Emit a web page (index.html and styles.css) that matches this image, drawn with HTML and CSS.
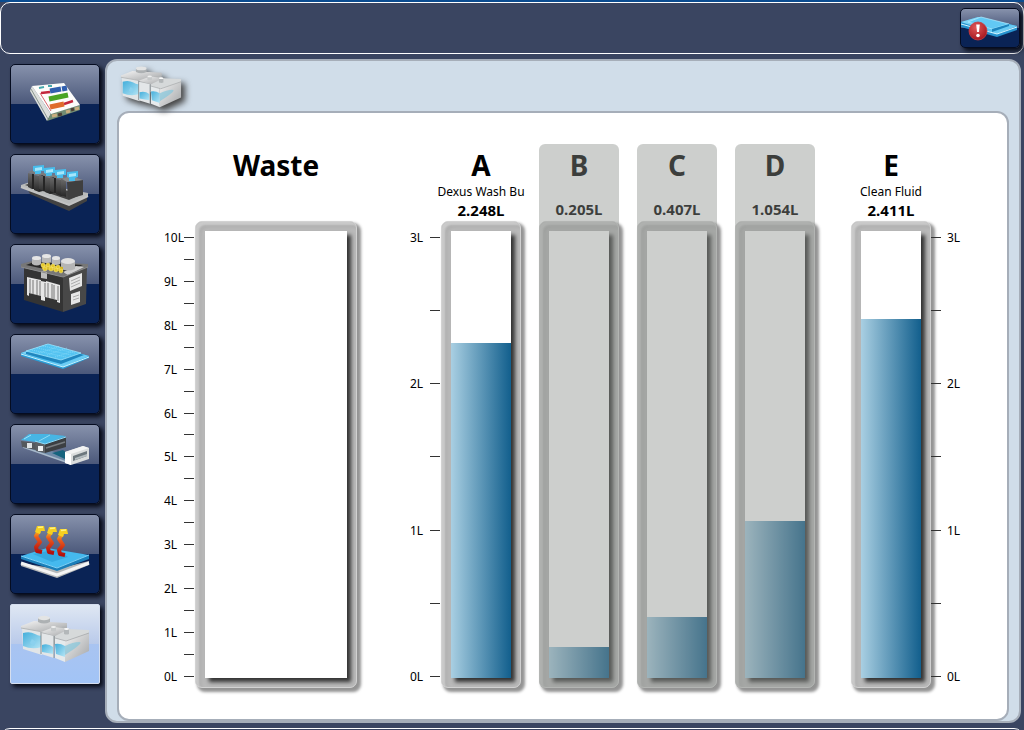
FILE: index.html
```html
<!DOCTYPE html>
<html lang="en">
<head>
  <meta charset="UTF-8" />
  <meta name="viewport" content="width=device-width, initial-scale=1.0" />
  <title>System Fluids</title>
  <link rel="stylesheet" href="styles.css">
</head>
<body>
  <!--shared gradients and the fluid tanks icon-->
  <svg class="defs" aria-hidden="true">
    <defs>
      <linearGradient id="cyan" x1="0" y1="0" x2="1" y2="1">
        <stop offset="0" stop-color="#a5e6fb"/><stop offset="0.5" stop-color="#48bdf0"/><stop offset="1" stop-color="#8fdcf8"/>
      </linearGradient>
      <linearGradient id="dark" x1="0" y1="0" x2="0" y2="1">
        <stop offset="0" stop-color="#6a6a6a"/><stop offset="1" stop-color="#262626"/>
      </linearGradient>
      <linearGradient id="silver" x1="0" y1="0" x2="1" y2="1">
        <stop offset="0" stop-color="#f4f4f4"/><stop offset="1" stop-color="#a2a4a6"/>
      </linearGradient>
      <linearGradient id="water" x1="0" y1="0" x2="1" y2="1">
        <stop offset="0" stop-color="#43aedb"/><stop offset="1" stop-color="#b5e5f5"/>
      </linearGradient>
      <linearGradient id="flame" x1="0" y1="0" x2="0" y2="1">
        <stop offset="0" stop-color="#f5b820"/><stop offset="0.3" stop-color="#ec5a1c"/><stop offset="1" stop-color="#b3100e"/>
      </linearGradient>
      <radialGradient id="red" cx="0.4" cy="0.3" r="0.8">
        <stop offset="0" stop-color="#e05a5a"/><stop offset="1" stop-color="#a00f18"/>
      </radialGradient>
    </defs>
    <symbol id="tanks" viewBox="9 9 72 52">
      <path d="M12 23 32 27V51L13 45Z" fill="#e1e5e7"/>
      <path d="M13 29Q20 27 25 30T32 31V43Q22 46 13 42Z" fill="url(#water)"/>
      <path d="M22 35l4 3-2 4-4-3Z" fill="#8bd1ee"/>
      <path d="M32 27 57 20V32L32 50Z" fill="#b0b3b5"/>
      <path d="M11 22 24 17 57 19 57 22 33 28 11 24Z" fill="url(#silver)"/>
      <path d="M11 24 33 28 57 22" fill="none" stroke="#b5b8b9"/>
      <path d="M28 14V18Q34 21 40 18V14Z" fill="#adb1b3"/>
      <ellipse cx="34" cy="14" rx="6" ry="2.2" fill="#e3e4e4"/>
      <path d="M31 29 44 32V54L31 50Z" fill="#e3e6e8"/>
      <path d="M32 41Q38 39 43 43V50L32 48Z" fill="url(#water)"/>
      <path d="M31 28 44 23 61 25 45 32Z" fill="url(#silver)"/>
      <path d="M31 28V50M44 32V54" stroke="#7d868b" stroke-width="0.9"/>
      <path d="M41 23V27Q44 28 46 27V23Z" fill="#c5c8c9"/>
      <ellipse cx="43.5" cy="23" rx="2.5" ry="1" fill="#f0f0f0"/>
      <path d="M45 33 55 36V58L45 54Z" fill="#e6eaec"/>
      <path d="M45 40Q50 39 55 42V53L46 50Z" fill="url(#water)"/>
      <path d="M55 36 79 28V47L55 58Z" fill="url(#silver)"/>
      <path d="M55 42Q63 38 69 38T58 49L55 51Z" fill="#85c6dc" opacity="0.7"/>
      <path d="M45 32 59 25 79 26 79 29 56 37 45 34Z" fill="#d6d9da"/>
      <path d="M45 34 56 37 79 29" fill="none" stroke="#a0a4a6" stroke-width="0.7"/>
      <path d="M54 25V30Q57 31 59 30V25Z" fill="#b3b7b9"/>
      <ellipse cx="56.5" cy="25" rx="2.5" ry="1" fill="#fafafa"/>
    </symbol>
  </svg>

  <div class="app">
    <header class="topbar">
      <button class="alert-btn" type="button" aria-label="Plate alert">
        <svg viewBox="1 1 58 38">
          <path d="M1 14 18 9 57 18V22L37 29 1 19Z" fill="#2793cf"/>
          <path d="M1 14 18 9 57 18 37 26Z" fill="url(#cyan)"/>
          <path d="M8 14 21 9 49 16 32 21Z" fill="#62c9f4" stroke="#b6edff" stroke-width="0.7"/>
          <path d="M32 21 49 16V18L32 24Z" fill="#1c84bd"/>
          <path d="M1 16 37 26 57 19" fill="none" stroke="#d5f6ff" stroke-width="1"/>
          <circle cx="18" cy="23" r="9" fill="url(#red)" stroke="#c93a3e" stroke-width="0.8"/>
          <path d="M16.2 16.5h3.6l-0.8 7.5h-2Z" fill="#fff"/>
          <circle cx="18" cy="27.5" r="1.8" fill="#fff"/>
        </svg>
      </button>
    </header>

    <div class="workspace">
      <nav class="sidebar">
        <button class="nav-btn" type="button" aria-label="Worklist">
          <svg viewBox="1 1 88 78">
            <path d="M22 22 20 27 37 57 41 50Z" fill="#dcdfdc"/>
            <path d="M21 25 38 55" stroke="#8c9892" stroke-width="1"/>
            <path d="M41 49 70 41 70 46 37 57Z" fill="#728c74"/>
            <path d="M42 52l5-1M56 48l4-1M65 45l4-1" stroke="#c9ad7e" stroke-width="3"/>
            <path d="M48 51l4-1M61 46l3-1" stroke="#4d3f34" stroke-width="3"/>
            <path d="M22 22 54 19 70 41 41 50Z" fill="#fdfdfb"/>
            <path d="M29 24l5-1M38 22l4 0" stroke="#48a9ae" stroke-width="2"/>
            <path d="M31 29l9-1M54 40l9-3" stroke="#c3273c" stroke-width="2.5"/>
            <path d="M40 27l11-2M52 25l5-1" stroke="#315fae" stroke-width="5"/>
            <path d="M39 35l19-4" stroke="#4aa525" stroke-width="5"/>
            <path d="M40 43l14-3" stroke="#df6c2c" stroke-width="5"/>
            <path d="M30 29 41 47" stroke="#d7656d" stroke-width="1"/>
          </svg>
        </button>
        <button class="nav-btn" type="button" aria-label="Samples">
          <svg viewBox="1 1 88 78">
            <path d="M17 34 59 49 77 41V47L59 57 20 40Z" fill="#424242"/>
            <path d="M11 31 20 28 78 39 78 42 59 51 11 33Z" fill="#b9bbbb"/>
            <path d="M15 31 21 29 73 40 59 46Z" fill="#444"/>
            <g id="vial">
              <path d="M18 19 22 20V35L18 33ZM24 21 29 22V38L24 36Z" fill="url(#dark)"/>
              <path d="M22 20 24 19V35H22ZM29 22 33 21V37L29 38Z" fill="#252525"/>
              <path d="M18 18 25 16 34 20 29 22Z" fill="#7c7c7c"/>
              <path d="M23 12 34 11 34 17 31 17 31 20 25 20 25 18 23 17Z" fill="#48bdec"/>
              <path d="M25 14 32 13V16L25 17Z" fill="#a5e6fb"/>
            </g>
            <use href="#vial" x="11" y="2"/>
            <use href="#vial" x="22" y="4"/>
            <path d="M51 25 56 26V43L51 41Z" fill="url(#dark)"/>
            <path d="M57 28 73 26V41L58 45Z" fill="#3f3f3f"/>
            <path d="M52 25 60 22 73 26 57 28Z" fill="#8a8a8a"/>
            <path d="M57 18 68 17 68 23 65 24 65 27 59 27 59 24 57 23Z" fill="#48bdec"/>
            <path d="M59 20 66 19V22L59 23Z" fill="#a5e6fb"/>
            <path d="M11 33 59 51 78 42" fill="none" stroke="#c2c3c3" stroke-width="2"/>
          </svg>
        </button>
        <button class="nav-btn" type="button" aria-label="Reagents">
          <svg viewBox="1 1 88 78">
            <path d="M14 24 53 33V68L14 56Z" fill="#343434"/>
            <path d="M53 33 77 23 76 60 53 68Z" fill="#484848"/>
            <path d="M11 20 22 17 78 20 78 23 53 33 11 23Z" fill="#777"/>
            <path d="M16 21 24 18 73 21 53 29Z" fill="#282828"/>
            <path d="M22 14V20Q27 23 31 20V14ZM32 12V18Q36 20 41 18V12ZM42 14V20Q46 22 50 20V14Z" fill="#b8b8b8"/>
            <ellipse cx="26.5" cy="14" rx="4.5" ry="2" fill="#e6e6e6"/>
            <ellipse cx="36.5" cy="12" rx="4.5" ry="2" fill="#e6e6e6"/>
            <ellipse cx="46" cy="14" rx="4" ry="2" fill="#e6e6e6"/>
            <path d="M53 28 66 22 74 23 58 31Z" fill="#d0d0d0"/>
            <path d="M51 17V25Q58 28 65 25V17Z" fill="#b5b5b5"/>
            <ellipse cx="58" cy="17" rx="7" ry="3" fill="#e0e0e0"/>
            <path d="M31 20 53 23 53 28 32 25Z" fill="#d3b41f"/>
            <g fill="#e7ca2a" stroke="#fbef94" stroke-width="0.5">
              <circle cx="33" cy="21" r="2"/><circle cx="38" cy="21" r="2"/><circle cx="43" cy="22" r="2"/><circle cx="48" cy="23" r="2"/><circle cx="35" cy="25" r="2"/><circle cx="41" cy="25" r="2"/><circle cx="46" cy="26" r="2"/><circle cx="51" cy="27" r="2"/>
            </g>
            <path d="M31 27 37 28V35L31 34Z" fill="#bdbdbd"/>
            <path d="M17 33 31 36 31 37 36 38 36 37 50 41V59L47 58V56L35 53V57L31 56V52L19 49V52L17 51Z" fill="#e6e6e6"/>
            <path d="M20 35V49M23 36V50M27 36V51M30 37V52M35 39V53M38 39V54M42 40V55M44 41V55M48 42V57" stroke="#777" stroke-width="1"/>
            <path d="M59 34 72 29V42L60 47ZM61 50 70 47V58L61 61Z" fill="#e6e6e6"/>
            <path d="M61 37l9-4M61 40l9-4M61 43l9-4M63 53l6-2M63 56l6-2" stroke="#aaa" stroke-width="1"/>
            <path d="M11 23 53 33 78 23" fill="none" stroke="#8b8b8b"/>
          </svg>
        </button>
        <button class="nav-btn" type="button" aria-label="Plates">
          <svg viewBox="1 1 88 78">
            <path d="M11 19 37 10 79 22 79 24 53 35 11 22Z" fill="#2a9fd8"/>
            <path d="M11 19 37 10 79 22 53 33Z" fill="url(#cyan)"/>
            <path d="M16 18 38 10 74 21 51 30 16 20Z" fill="#1f87bf"/>
            <path d="M16 17 38 10 71 19 51 26Z" fill="#54c3f1" stroke="#a8e9ff" stroke-width="0.7"/>
            <path d="M22 16 56 23M27 14 61 21M33 12 65 19M29 19 50 12M37 21 57 14M45 23 64 17" stroke="#86d9f8" stroke-width="0.8" stroke-dasharray="1 1"/>
            <path d="M11 20 53 33 79 23" fill="none" stroke="#c9f3ff" stroke-width="1"/>
          </svg>
        </button>
        <button class="nav-btn" type="button" aria-label="Instrument">
          <svg viewBox="1 1 88 78">
            <path d="M13 23 24 22 59 32 56 38Z" fill="#6e8aa8"/>
            <path d="M13 23 56 38" stroke="#a8bacb" stroke-width="1.5"/>
            <path d="M42 29 53 26 57 29 55 35Z" fill="#16637e"/>
            <path d="M11 17 26 19V26L12 23Z" fill="#55595d"/>
            <path d="M11 16 19 10 38 10 26 18Z" fill="#47b5e4"/>
            <path d="M14 15 21 11" stroke="#9ce4fb"/>
            <path d="M17 19h5v5h-5Z" fill="#e0e4e6"/>
            <path d="M25 18 35 20V29L26 27Z" fill="#5d6165"/>
            <path d="M35 20 56 13V23L35 29Z" fill="#3c3f42"/>
            <path d="M25 17 37 10 56 12 35 20Z" fill="#47b5e4"/>
            <path d="M25 17 35 20 56 13" fill="none" stroke="#8adbf7"/>
            <path d="M29 17 40 11" stroke="#8edbf6"/>
            <path d="M28 22h5v5h-5Z" fill="#eef0f1"/>
            <path d="M36 24 55 18" stroke="#777c80" stroke-width="1.5"/>
            <path d="M55 28 73 22 79 24V35L61 41 55 39Z" fill="#dadddd"/>
            <path d="M55 28 61 30V41L55 39Z" fill="#fff"/>
            <path d="M55 28 73 22 79 24 61 30Z" fill="#f3f4f4"/>
            <path d="M63 32 77 27V32L63 37Z" fill="#6d777d"/>
            <path d="M65 34 77 30V32L65 36Z" fill="#b4bcc0"/>
          </svg>
        </button>
        <button class="nav-btn" type="button" aria-label="Incubators">
          <svg viewBox="1 1 88 78">
            <path d="M11 49 47 55 79 47V51L47 64 11 52Z" fill="#b5b8b9"/>
            <path d="M11 49 47 61 79 49" fill="none" stroke="#f4f4f4" stroke-width="3"/>
            <path d="M11 42 47 54 79 41V45L47 57 11 45Z" fill="#1b7fb9"/>
            <path d="M11 42 37 34 79 41 47 54Z" fill="#45b9ee"/>
            <path d="M11 42 47 54 79 41" fill="none" stroke="#7fd2f7"/>
            <path d="M23 40 48 35 58 43 42 48Z" fill="#1f8fca" opacity="0.4"/>
            <g id="heat">
              <path d="M29 17 26 22 30 28 26 33 27 37 32 38" fill="none" stroke="url(#flame)" stroke-width="4" stroke-linejoin="round"/>
              <path d="M25 18 27 12 34 12 35 17 31 17 30 20Z" fill="#f5cf20"/>
              <path d="M28 13.5 33 13" stroke="#fff37e" stroke-width="1.5"/>
            </g>
            <use href="#heat" x="12" y="1"/>
            <use href="#heat" x="23" y="3"/>
          </svg>
        </button>
        <button class="nav-btn active" type="button" aria-label="Fluids">
          <svg viewBox="1 1 88 78"><use href="#tanks" x="9" y="9" width="72" height="52"/></svg>
        </button>
      </nav>

      <main class="panel">
        <div class="panel-header">
          <svg class="panel-icon"><use href="#tanks"/></svg>
        </div>

        <div class="fluids">
          <!--waste-->
          <div class="group">
            <ul class="scale">
              <li>10L</li><li></li><li>9L</li><li></li><li>8L</li><li></li><li>7L</li><li></li><li>6L</li><li></li><li>5L</li><li></li><li>4L</li><li></li><li>3L</li><li></li><li>2L</li><li></li><li>1L</li><li></li><li>0L</li>
            </ul>
            <section class="tank waste">
              <div class="tank-info"><h2>Waste</h2></div>
              <div class="frame"><div class="glass"></div></div>
            </section>
          </div>

          <!--wash bottles A-E-->
          <div class="group">
            <ul class="scale">
              <li>3L</li><li></li><li>2L</li><li></li><li>1L</li><li></li><li>0L</li>
            </ul>
            <div class="bottles">
              <section class="tank">
                <div class="tank-info"><h2>A</h2><p class="fluid">Dexus Wash Bu</p><p class="volume">2.248L</p></div>
                <div class="frame"><div class="glass"><div class="fill" style="height: 74.93%"></div></div></div>
              </section>
              <section class="tank disabled">
                <div class="tank-info"><h2>B</h2><p class="fluid"></p><p class="volume">0.205L</p></div>
                <div class="frame"><div class="glass"><div class="fill" style="height: 6.83%"></div></div></div>
              </section>
              <section class="tank disabled">
                <div class="tank-info"><h2>C</h2><p class="fluid"></p><p class="volume">0.407L</p></div>
                <div class="frame"><div class="glass"><div class="fill" style="height: 13.57%"></div></div></div>
              </section>
              <section class="tank disabled">
                <div class="tank-info"><h2>D</h2><p class="fluid"></p><p class="volume">1.054L</p></div>
                <div class="frame"><div class="glass"><div class="fill" style="height: 35.13%"></div></div></div>
              </section>
              <section class="tank clean">
                <div class="tank-info"><h2>E</h2><p class="fluid">Clean Fluid</p><p class="volume">2.411L</p></div>
                <div class="frame"><div class="glass"><div class="fill" style="height: 80.37%"></div></div></div>
              </section>
            </div>
            <ul class="scale right">
              <li>3L</li><li></li><li>2L</li><li></li><li>1L</li><li></li><li>0L</li>
            </ul>
          </div>
        </div>
      </main>
    </div>

    <footer class="bottombar"></footer>
  </div>
</body>
</html>
```
FILE: styles.css
```css
/* Reset and Base Styles */
* {
  margin: 0;
  padding: 0;
  box-sizing: border-box;
}
body {
  font-family: 'Noto Sans', 'Open Sans', sans-serif;
  font-size: 12px;
  color: #000;
  background: #3a4561;
}
.defs {
  position: absolute;
  width: 0;
  height: 0;
}
.app {
  display: flex;
  flex-direction: column;
  height: 100vh;
  min-height: 700px;
  overflow: hidden;
  border-top: 2px solid #0b4c90;
}
/* Top and bottom bars */
.topbar {
  display: flex;
  justify-content: flex-end;
  align-items: flex-start;
  height: 52px;
  padding: 5px 3px;
  border: 1px solid #fff;
  border-radius: 10px;
}
.bottombar {
  flex: none;
  height: 40px;
  margin-bottom: -38px;
  border: 1px solid #fff;
  border-radius: 10px;
}
/* Buttons */
.alert-btn,
.nav-btn {
  display: block;
  border: 1px solid #050c20;
  border-radius: 5px;
  background: linear-gradient(#8792ac, #4b587a 50%, #0a2355 50%, #0a2355);
  box-shadow: 3px 3px 4px #080c18;
  cursor: pointer;
}
.alert-btn {
  width: 60px;
  height: 40px;
}
.nav-btn {
  width: 90px;
  height: 80px;
}
.alert-btn svg,
.nav-btn svg {
  display: block;
  width: 100%;
  height: 100%;
}
.nav-btn.active {
  border-color: #d5deee;
  border-radius: 2px;
  background: linear-gradient(#dfe7f3, #b9caea 50%, #a9c4f1 50%, #a2c4f6);
}
/* Layout */
.workspace {
  display: flex;
  flex: 1;
  gap: 5px;
  min-height: 0;
  padding: 5px 3px 5px 10px;
}
.sidebar {
  display: flex;
  flex-direction: column;
  gap: 10px;
  padding-top: 5px;
}
.panel {
  display: flex;
  flex: 1;
  flex-direction: column;
  padding: 0 10px;
  background: #d0dde9;
  border: 2px solid #a6aeb9;
  border-radius: 12px;
}
.panel-header {
  height: 50px;
  padding: 3px 0 0 2px;
}
.panel-icon {
  display: block;
  width: 64px;
  height: 46px;
  overflow: visible;
  filter: drop-shadow(4px 4px 3px #444);
}
.fluids {
  display: flex;
  flex: 1;
  justify-content: space-between;
  min-height: 0;
  padding: 31px 45px 31px;
  background: #fff;
  border: 2px solid #a6aeb9;
  border-radius: 12px;
}
.group {
  display: flex;
}
/* Scales */
.scale {
  display: flex;
  flex-direction: column;
  justify-content: space-between;
  width: 31px;
  padding: 93px 0 11px;
  list-style: none;
}
.scale li {
  display: flex;
  align-items: center;
  justify-content: space-between;
  width: 30px;
  height: 1px;
}
.scale li::after {
  content: "";
  width: 10px;
  height: 1px;
  margin-left: auto;
  background: #333;
}
/* sits above the shadow of the last tank */
.scale.right {
  position: relative;
}
.scale.right li {
  flex-direction: row-reverse;
  justify-content: flex-end;
  gap: 6px;
}
.scale.right li::after {
  margin-left: 0;
}
/* Tanks */
.bottles {
  display: flex;
  gap: 18px;
}
.tank {
  display: flex;
  flex-direction: column;
  position: relative;
  width: 80px;
}
.tank.waste {
  width: 162px;
}
.tank.clean {
  margin-left: 18px;
}
.tank-info {
  display: flex;
  flex-direction: column;
  align-items: center;
  height: 77px;
  white-space: nowrap;
}
.tank-info h2 {
  font-size: 28px;
  line-height: 42px;
}
.fluid {
  height: 12px;
  line-height: 12px;
}
.volume {
  font-size: 15px;
  font-weight: bold;
  line-height: 24px;
}
.frame {
  display: flex;
  flex: 1;
  padding: 9px;
  border: 1px solid #d2d2d2;
  border-radius: 7px;
  background: #bababa;
  box-shadow: inset 3px 3px 2px #cacaca, inset 6px 6px 3px #b0b0b0, 3px 3px 3px 1px #949494;
}
.glass {
  display: flex;
  flex: 1;
  align-items: flex-end;
  background: #fff;
  box-shadow: 4px 4px 4px #333;
}
.fill {
  width: 100%;
  background: linear-gradient(to right, #a9cfe2, #125f8d);
}
/* Grey veil over bottles not in use */
.tank.disabled::after {
  content: "";
  position: absolute;
  inset: 0;
  border-radius: 6px;
  background: rgba(138, 143, 140, 0.43);
}
```
